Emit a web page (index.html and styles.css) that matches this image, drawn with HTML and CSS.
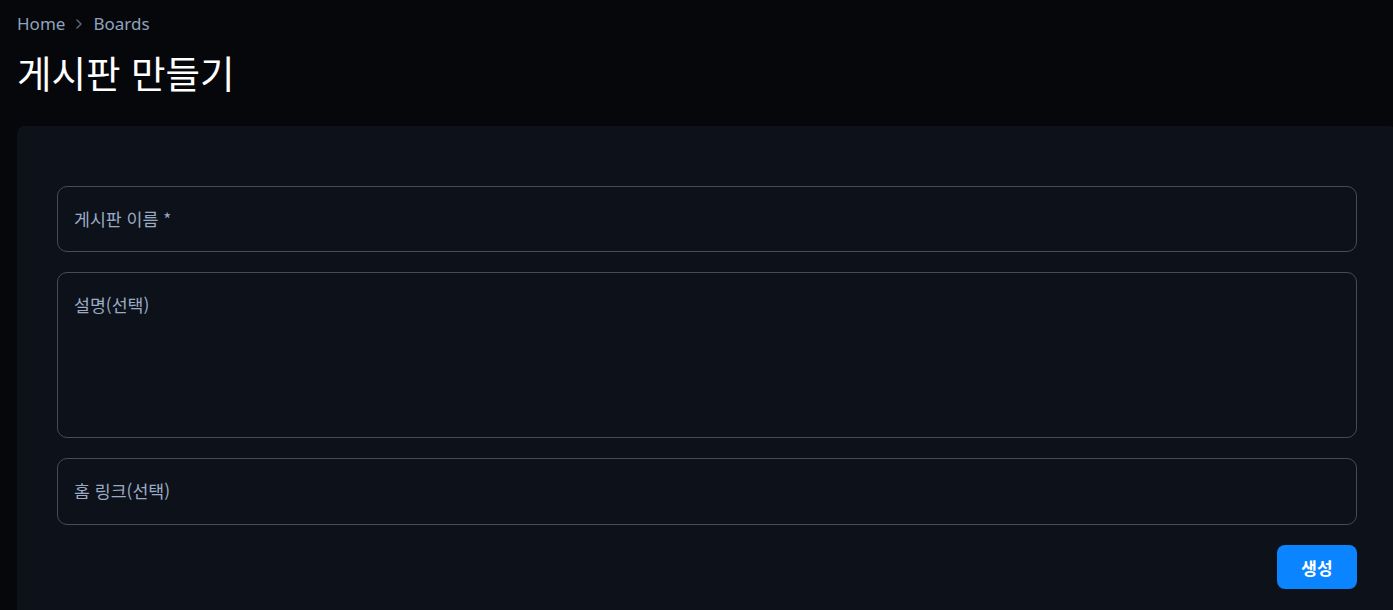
FILE: index.html
```html
<!DOCTYPE html>
<html lang="ko">
<head>
<meta charset="utf-8">
<title>게시판 만들기</title>
<link rel="stylesheet" href="styles.css">
</head>
<body>
<div class="page">
  <nav class="crumbs">
    <a class="crumb">Home</a>
    <svg class="chev" width="16" height="16" viewBox="0 0 16 16"><path d="M6 4l4 4-4 4" fill="none" stroke="currentColor" stroke-width="1.6" stroke-linecap="round" stroke-linejoin="round"/></svg>
    <a class="crumb">Boards</a>
  </nav>
  <h1 class="title">게시판 만들기</h1>
  <section class="card">
    <form class="form">
      <div class="field field-line"><label class="label">게시판 이름 *</label></div>
      <div class="field field-area"><label class="label">설명(선택)</label></div>
      <div class="field field-line last"><label class="label">홈 링크(선택)</label></div>
      <div class="actions"><button type="button" class="btn">생성</button></div>
    </form>
  </section>
</div>
</body>
</html>
```
FILE: styles.css
```css
html, body {
  margin: 0;
  padding: 0;
  background: #06070b;
  overflow: hidden;
}
body {
  font-family: "Noto Sans", "Noto Sans CJK KR", sans-serif;
  color: #fff;
}
.page {
  padding: 12px 0 0 17px;
}
.crumbs {
  display: flex;
  align-items: center;
  gap: 6px;
  height: 24px;
  font-size: 17px;
  line-height: 24px;
}
.crumb {
  color: #90a2bc;
}
.chev {
  color: #5b6270;
}
.title {
  margin: 14px 0 0;
  font-family: "Noto Sans CJK KR", "Noto Sans", sans-serif;
  font-size: 37.5px;
  line-height: 44px;
  font-weight: 400;
  color: #ffffff;
}
.card {
  margin-top: 32px;
  width: 1380px;
  height: 520px;
  background: #0d111a;
  border-radius: 8px;
  box-sizing: border-box;
  padding: 60px 40px 40px;
}
.form {
  display: flex;
  flex-direction: column;
  gap: 20px;
}
.field {
  box-sizing: border-box;
  border: 1px solid #474b55;
  border-radius: 10px;
  padding: 20px 16px;
}
.field-line { height: 66px; }
.field-area { height: 166px; }
.field.last { height: 67px; }
.label {
  font-family: "Noto Sans CJK KR", "Noto Sans", sans-serif;
  font-size: 17.3px;
  line-height: 24px;
  color: #9aabc4;
}
.actions {
  display: flex;
  justify-content: flex-end;
}
.btn {
  width: 80px;
  height: 44px;
  border: none;
  border-radius: 8px;
  background: #0a84ff;
  color: #fff;
  font-family: "Noto Sans CJK KR", "Noto Sans", sans-serif;
  font-size: 17px;
  font-weight: 700;
  padding: 0;
}
```
